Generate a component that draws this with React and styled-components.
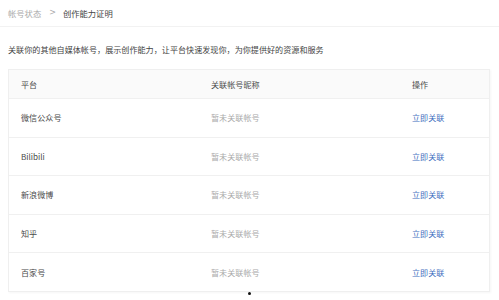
import React from "react";
import styled, { createGlobalStyle } from "styled-components";

const Global = createGlobalStyle`
  html, body { margin: 0; padding: 0; background: #fff; }
  body { font-family: "Noto Sans CJK SC", "Noto Sans", sans-serif; color: #333; }
`;

const Page = styled.div`
  width: 499px;
  height: 300px;
  position: relative;
  overflow: hidden;
`;

const Header = styled.div`
  height: 27px;
  box-sizing: border-box;
  border-bottom: 1px solid #f2f2f2;
  display: flex;
  align-items: center;
  padding-left: 8px;
  font-size: 8.3px;
  line-height: 1;
`;

const Crumb = styled.span`
  color: ${(p) => (p.$current ? "#444" : "#aaa")};
`;

const Sep = styled.span`
  color: #aaa;
  margin: 0 7px 0 8px;
  font-family: "DejaVu Sans", sans-serif;
  font-size: 8px;
`;

const Desc = styled.p`
  margin: 0;
  padding: 17px 8px 0;
  font-size: 8.1px;
  line-height: 12px;
  color: #444;
`;

const Table = styled.div`
  margin: 13px 9px 0 8px;
  border: 1px solid #efefef;
  box-shadow: 1px 1px 2px rgba(0, 0, 0, 0.04);
`;

const Row = styled.div`
  display: grid;
  grid-template-columns: 190px 201px 1fr;
  align-items: center;
  height: ${(p) => (p.$head ? "28px" : "38.6px")};
  box-sizing: border-box;
  background: ${(p) => (p.$head ? "#fafafa" : "#fff")};
  border-top: ${(p) => (p.$first ? "none" : "1px solid #f0f0f0")};
  font-size: 8.1px;
`;

const Cell = styled.div`
  padding-left: 12px;
  color: ${(p) => (p.$muted ? "#aaa" : "#4a4a4a")};
`;

const Link = styled.a`
  padding-left: 12px;
  color: #3f6fc0;
  text-decoration: none;
`;

const Dot = styled.div`
  position: absolute;
  left: 248px;
  top: 292px;
  width: 3px;
  height: 3px;
  border-radius: 50%;
  background: #111;
`;

const platforms = ["微信公众号", "Bilibili", "新浪微博", "知乎", "百家号"];

export default function App() {
  return (
    <Page>
      <Global />
      <Header>
        <Crumb>帐号状态</Crumb>
        <Sep>&gt;</Sep>
        <Crumb $current>创作能力证明</Crumb>
      </Header>
      <Desc>关联你的其他自媒体帐号，展示创作能力，让平台快速发现你，为你提供好的资源和服务</Desc>
      <Table>
        <Row $head $first>
          <Cell>平台</Cell>
          <Cell>关联帐号昵称</Cell>
          <Cell>操作</Cell>
        </Row>
        {platforms.map((p) => (
          <Row key={p}>
            <Cell>{p}</Cell>
            <Cell $muted>暂未关联帐号</Cell>
            <Link href="#">立即关联</Link>
          </Row>
        ))}
      </Table>
      <Dot />
    </Page>
  );
}
